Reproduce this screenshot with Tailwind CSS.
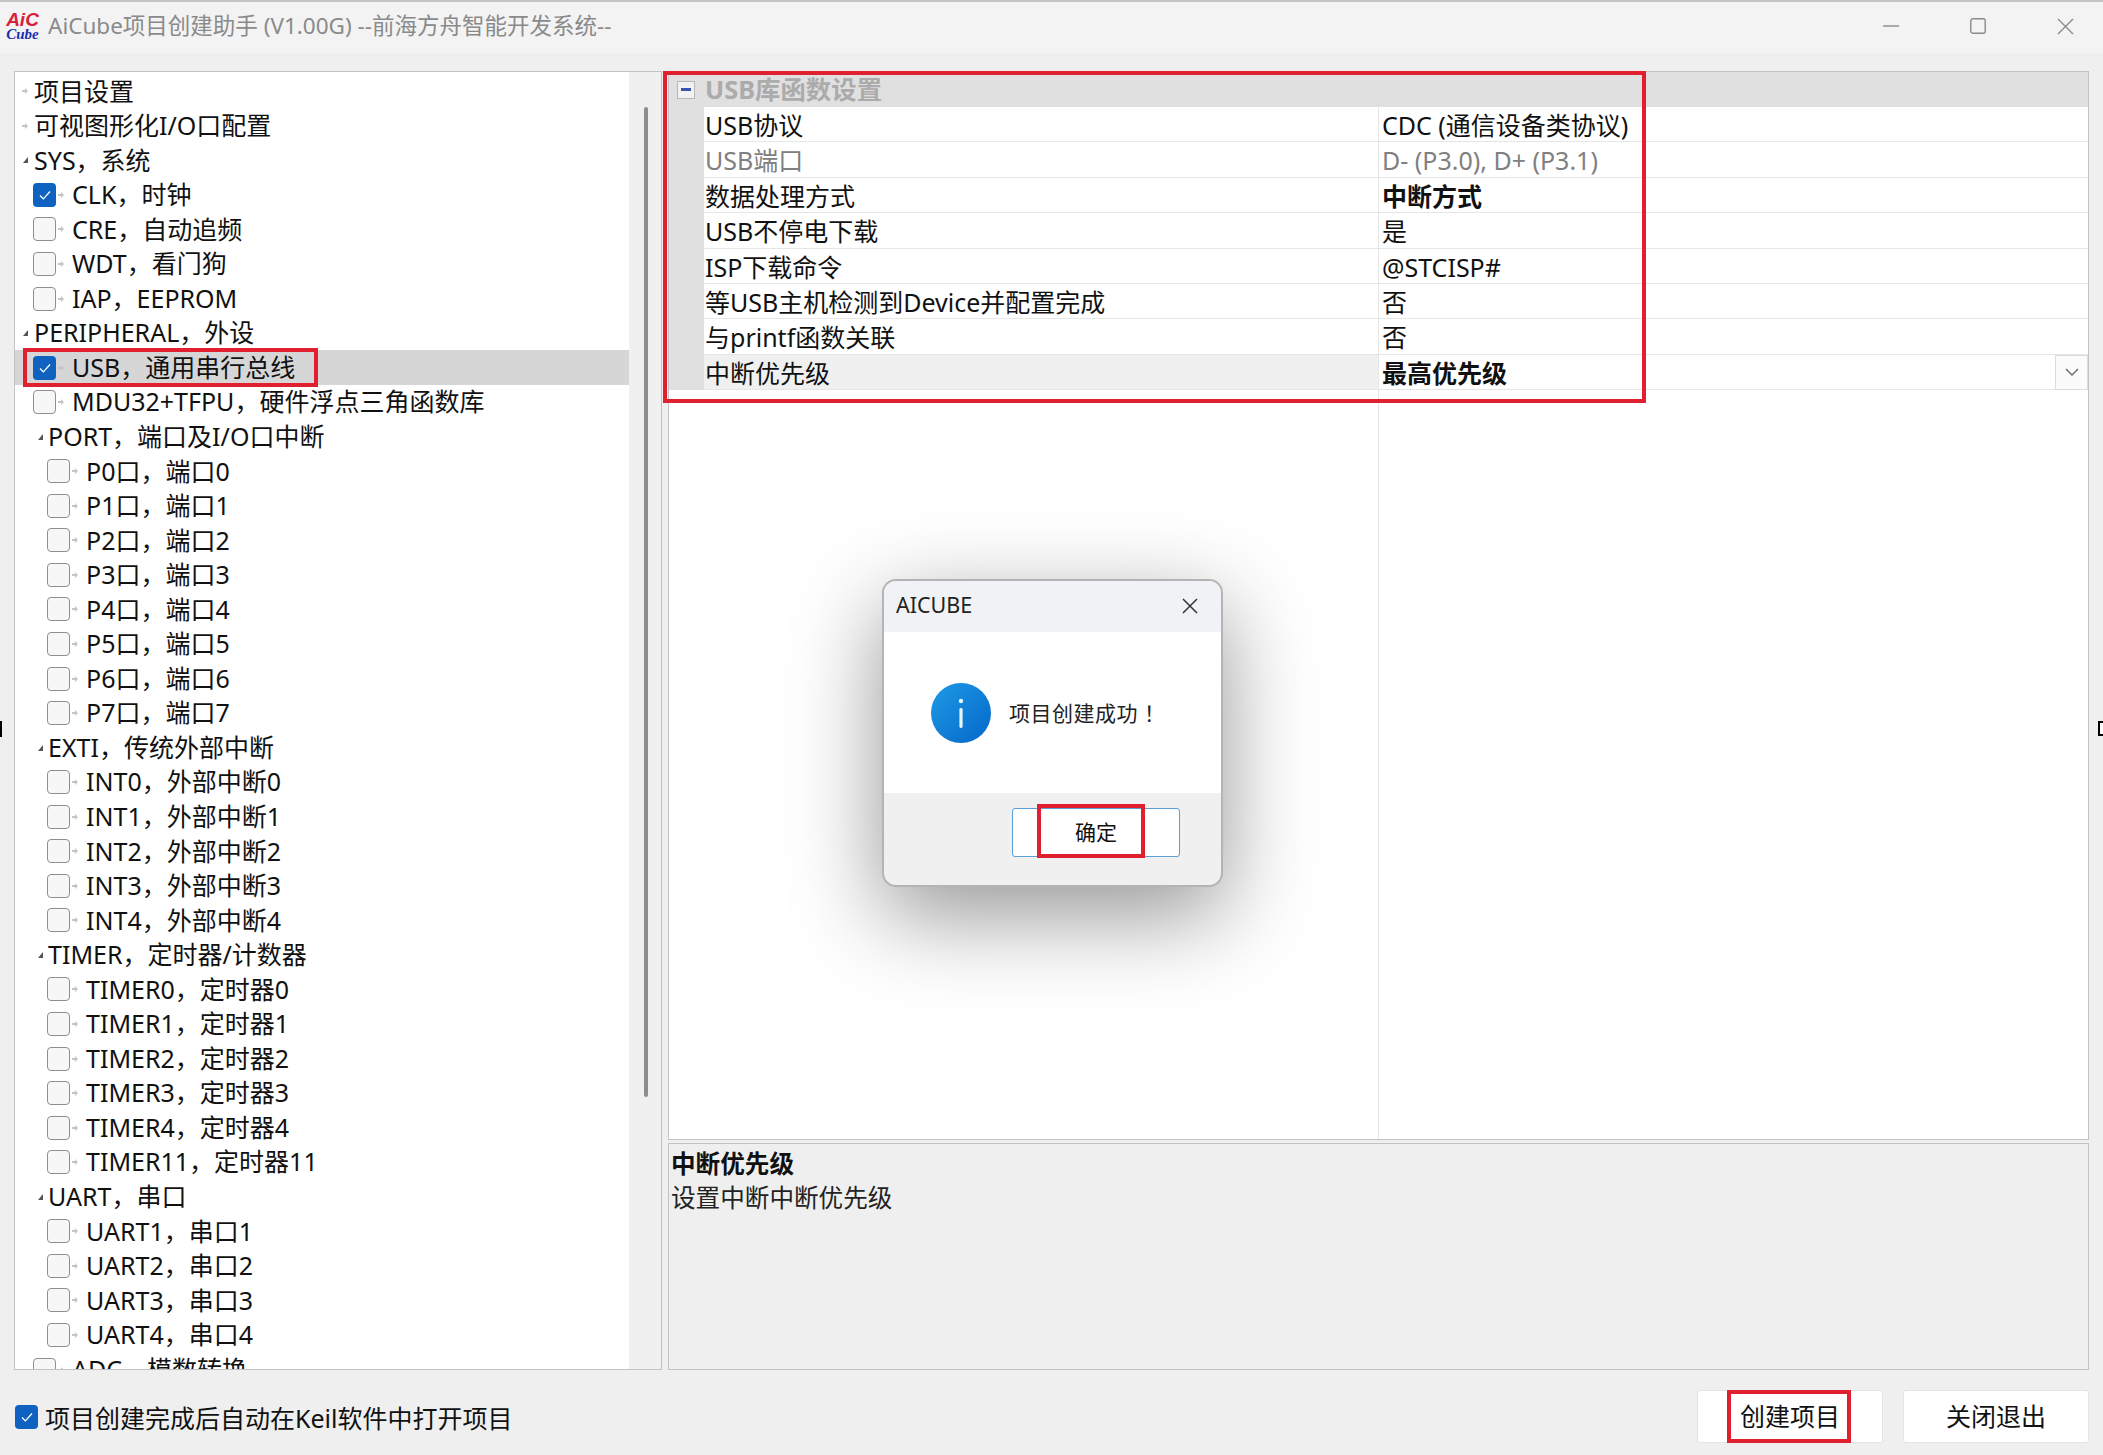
<!DOCTYPE html>
<html lang="zh-CN">
<head>
  <meta charset="UTF-8">
  <title>AiCube项目创建助手</title>
  <script src="https://cdn.jsdelivr.net/npm/@tailwindcss/browser@4"></script>
</head>
<body class="bg-[#efefef] overflow-hidden font-['Noto_Sans','Noto_Sans_CJK_SC',sans-serif] text-[#111]">
  <div class="relative w-[2103px] h-[1455px] flex flex-col border-t-2 border-[#c4c4c4]">

    <!-- title bar -->
    <div class="h-[51px] flex items-center bg-[#f3f3f3] shrink-0">
      <div class="w-[48px] pr-[3px] -mt-[2px] flex flex-col items-center italic font-bold leading-[15px]">
        <span class="text-[19px] text-[#d8203c] font-['Liberation_Sans',sans-serif]">AiC</span>
        <span class="text-[15px] text-[#1a2fb0] font-['Liberation_Serif',serif]">Cube</span>
      </div>
      <span class="text-[22.5px] -mt-[3px] text-[#8a8a8a]">AiCube项目创建助手 (V1.00G) --前海方舟智能开发系统--</span>
      <div class="ml-auto flex items-center text-[#8a8a8a] -mt-[3px]">
        <svg class="w-[16px] h-[16px] mr-[71px]" viewBox="0 0 16 16"><path d="M0 8h16" stroke="currentColor" stroke-width="1.4"/></svg>
        <svg class="w-[16px] h-[16px] mr-[71px]" viewBox="0 0 16 16"><rect x=".8" y=".8" width="14.4" height="14.4" rx="2" fill="none" stroke="currentColor" stroke-width="1.4"/></svg>
        <svg class="w-[17px] h-[17px] mr-[29px]" viewBox="0 0 17 17"><path d="M1 1l15 15M16 1L1 16" stroke="currentColor" stroke-width="1.4"/></svg>
      </div>
    </div>

    <div class="h-[18px] shrink-0"></div>

    <!-- main area -->
    <div class="h-[1299px] flex shrink-0 pl-[14px] pr-[14px]">
      <!-- tree -->
      <div class="relative w-[648px] h-full border border-[#c2c2c2] flex bg-[#f0f0f0] overflow-hidden">
        <div id="tree" class="w-[614px] h-full bg-white pt-[2px] overflow-hidden"></div>
        <div class="flex-1 relative">
          <div class="absolute left-[15px] top-[35px] w-[4px] h-[990px] rounded-full bg-[#8d8d8d]"></div>
        </div>
      </div>

      <!-- right column -->
      <div class="ml-[6px] flex-1 flex flex-col">
        <div class="h-[1069px] bg-white border border-[#c2c2c2] flex flex-col overflow-hidden shrink-0">
          <div class="h-[35px] bg-[#e0e0e0] flex items-center shrink-0">
            <div class="ml-[8px] w-[18px] h-[18px] border border-[#b8b8b8] bg-[#f2f2f2] flex items-center justify-center">
              <div class="w-[10px] h-[3px] bg-[#3a55b0]"></div>
            </div>
            <span class="ml-[10px] mt-px text-[25.4px] font-bold text-[#ababab] leading-none">USB库函数设置</span>
          </div>
          <div id="props" class="flex flex-col shrink-0"></div>
          <div class="flex-1 flex">
            <div class="w-[710px] border-r border-[#e6e6e6]"></div>
          </div>
        </div>
        <div class="mt-[3px] flex-1 border border-[#c2c2c2] bg-[#efefef] px-[2px] pt-[3px] text-[24.6px] leading-[34px]">
          <div class="font-bold">中断优先级</div>
          <div class="text-[#222]">设置中断中断优先级</div>
        </div>
      </div>
    </div>

    <!-- footer -->
    <div class="flex-1 flex items-start pl-[15px] pr-[14px] pt-[20px]">
      <div class="mt-[15px] w-[23px] h-[24px] rounded-[4px] bg-[#0f62c0] flex items-center justify-center">
        <svg class="w-[14px] h-[14px]" viewBox="0 0 14 14"><path d="M2 7.5l3.4 3.4L12 3.5" fill="none" stroke="#fff" stroke-width="1.3"/></svg>
      </div>
      <span class="mt-[10px] ml-[7px] text-[25px] leading-[36px]">项目创建完成后自动在Keil软件中打开项目</span>
      <button class="relative ml-auto w-[186px] h-[53px] bg-white rounded-[3px] border border-[#e4e4e4] text-[25px]">
        创建项目
        <span class="absolute left-[29px] -top-px w-[124px] h-[53px] border-[4px] border-[#e0202f]"></span>
      </button>
      <button class="ml-[20px] w-[186px] h-[53px] bg-white rounded-[3px] border border-[#e4e4e4] text-[25px]">关闭退出</button>
    </div>

    <!-- annotation frames -->
    <div class="absolute left-[23px] top-[346px] w-[295px] h-[39px] border-[4px] border-[#e0202f]"></div>
    <div class="absolute left-[663px] top-[69px] w-[983px] h-[332px] border-[4px] border-[#e0202f]"></div>

    <!-- leftovers of the resize cursor at the window edges -->
    <div class="absolute left-0 top-[719px] w-[2px] h-[16px] bg-black"></div>
    <div class="absolute right-0 top-[719px] w-[5px] h-[15px] border-2 border-r-0 border-black bg-white"></div>

    <!-- message box -->
    <div class="absolute left-[882px] top-[577px] w-[341px] h-[308px] rounded-[14px] border-2 border-[#b4b4b4] bg-[#f0f0f0] shadow-[0_28px_90px_rgba(0,0,0,0.42)] flex flex-col overflow-hidden">
      <div class="h-[51px] bg-[#f1f2f5] flex items-center justify-between pl-[12px] pr-[23px] shrink-0">
        <span class="text-[21.5px] text-[#222] -mt-[2px]">AICUBE</span>
        <svg class="w-[16px] h-[16px] -mt-[2px]" viewBox="0 0 16 16"><path d="M1 1l14 14M15 1L1 15" stroke="#333" stroke-width="1.5"/></svg>
      </div>
      <div class="h-[161px] bg-white flex items-center pl-[47px] shrink-0">
        <svg class="w-[60px] h-[60px]" viewBox="0 0 60 60">
          <defs><linearGradient id="infoBlue" x1="0" y1="0" x2="1" y2="1"><stop offset="0" stop-color="#1e9ae6"/><stop offset="1" stop-color="#0467c8"/></linearGradient></defs>
          <circle cx="30" cy="30" r="30" fill="url(#infoBlue)"/>
          <circle cx="30" cy="18" r="2.2" fill="#e8f4fc"/>
          <rect x="28.4" y="25" width="3.2" height="20" rx="1.4" fill="#e8f4fc"/>
        </svg>
        <span class="ml-[18px] mt-[2px] text-[21px] tracking-[0.5px] text-[#222]">项目创建成功 ！</span>
      </div>
      <div class="flex-1 relative">
        <button class="absolute left-[128px] top-[15px] w-[168px] h-[49px] bg-white rounded-[3px] border border-[#5a9fd8] text-[21px]">确定</button>
        <div class="absolute left-[153px] top-[11px] w-[108px] h-[54px] border-[4px] border-[#e0202f]"></div>
      </div>
    </div>
  </div>

  <script>
    // kind: l = plain top level, t = top level with children, s = nested section, c = checkbox row, n = nested checkbox row
    const rows = [
      ['l', '项目设置'], ['l', '可视图形化I/O口配置'], ['t', 'SYS，系统'],
      ['c', 'CLK，时钟', 1], ['c', 'CRE，自动追频'], ['c', 'WDT，看门狗'], ['c', 'IAP，EEPROM'],
      ['t', 'PERIPHERAL，外设'],
      ['c', 'USB，通用串行总线', 1, 1], ['c', 'MDU32+TFPU，硬件浮点三角函数库'],
      ['s', 'PORT，端口及I/O口中断'],
      ['n', 'P0口，端口0'], ['n', 'P1口，端口1'], ['n', 'P2口，端口2'], ['n', 'P3口，端口3'],
      ['n', 'P4口，端口4'], ['n', 'P5口，端口5'], ['n', 'P6口，端口6'], ['n', 'P7口，端口7'],
      ['s', 'EXTI，传统外部中断'],
      ['n', 'INT0，外部中断0'], ['n', 'INT1，外部中断1'], ['n', 'INT2，外部中断2'], ['n', 'INT3，外部中断3'], ['n', 'INT4，外部中断4'],
      ['s', 'TIMER，定时器/计数器'],
      ['n', 'TIMER0，定时器0'], ['n', 'TIMER1，定时器1'], ['n', 'TIMER2，定时器2'], ['n', 'TIMER3，定时器3'], ['n', 'TIMER4，定时器4'], ['n', 'TIMER11，定时器11'],
      ['s', 'UART，串口'],
      ['n', 'UART1，串口1'], ['n', 'UART2，串口2'], ['n', 'UART3，串口3'], ['n', 'UART4，串口4'],
      ['c', 'ADC，模数转换']
    ];
    const checkedBox = '<span class="w-[23px] h-[24px] rounded-[4px] bg-[#0f62c0] flex items-center justify-center shrink-0"><svg class="w-[14px] h-[14px]" viewBox="0 0 14 14"><path d="M2 7.5l3.4 3.4L12 3.5" fill="none" stroke="#fff" stroke-width="1.3"/></svg></span>';
    const emptyBox = '<span class="w-[23px] h-[24px] rounded-[4px] border border-[#8f8f8f] bg-[#f7f7f7] shrink-0"></span>';
    const dot = '<svg class="w-[6px] h-[6px] shrink-0" viewBox="0 0 6 6"><path d="M0 2h3V0l3 3-3 3V4H0z" fill="#c4c4c4"/></svg>';
    const arrow = '<svg class="w-[5px] h-[6px] shrink-0" viewBox="0 0 5 6"><path d="M5 0v6H0z" fill="#555"/></svg>';

    document.getElementById('tree').innerHTML = rows.map(([kind, label, checked, selected]) => {
      const rowClass = selected ? 'bg-[#d6d6d6]' : '';
      let lead = '';
      if (kind === 'l') lead = '<span class="w-[7px]"></span>' + dot + '<span class="w-[6px]"></span>';
      if (kind === 't') lead = '<span class="w-[8px]"></span>' + arrow + '<span class="w-[6px]"></span>';
      if (kind === 's') lead = '<span class="w-[23px]"></span>' + arrow + '<span class="w-[5px]"></span>';
      if (kind === 'c') lead = '<span class="w-[18px]"></span>' + (checked ? checkedBox : emptyBox) + '<span class="w-[2px]"></span>' + dot + '<span class="w-[8px]"></span>';
      if (kind === 'n') lead = '<span class="w-[32px]"></span>' + emptyBox + '<span class="w-[2px]"></span>' + dot + '<span class="w-[8px]"></span>';
      return `<div class="h-[34.55px] flex items-center text-[25px] whitespace-nowrap ${rowClass}">${lead}<span>${label}</span></div>`;
    }).join('');

    const props = [
      ['USB协议', 'CDC (通信设备类协议)'],
      ['USB端口', 'D- (P3.0), D+ (P3.1)', 'muted'],
      ['数据处理方式', '中断方式', 'bold'],
      ['USB不停电下载', '是'],
      ['ISP下载命令', '@STCISP#'],
      ['等USB主机检测到Device并配置完成', '否'],
      ['与printf函数关联', '否'],
      ['中断优先级', '最高优先级', 'active']
    ];
    document.getElementById('props').innerHTML = props.map(([name, value, mode]) => {
      const nameColor = mode === 'muted' ? 'text-[#808080]' : 'text-[#111]';
      const valueClass = mode === 'muted' ? 'text-[#808080]' : (mode === 'bold' || mode === 'active') ? 'font-bold' : '';
      const bg = mode === 'active' ? 'bg-[#f0f0f0]' : 'bg-white';
      const chevron = mode === 'active' ? '<span class="absolute right-0 top-0 w-[33px] h-[35px] bg-[#fbfbfb] border border-[#dcdcdc] flex items-center justify-center"><svg class="w-[14px] h-[8px]" viewBox="0 0 14 8"><path d="M1 1l6 6 6-6" fill="none" stroke="#666" stroke-width="1.4"/></svg></span>' : '';
      return `<div class="h-[35.4px] flex text-[25px] whitespace-nowrap">
        <div class="w-[35px] bg-[#e0e0e0] shrink-0"></div>
        <div class="w-[675px] ${bg} ${nameColor} border-b border-r border-[#e6e6e6] pl-[1px] pt-[3px] flex items-center shrink-0">${name}</div>
        <div class="relative flex-1 ${mode === 'active' ? 'bg-white' : bg} ${valueClass} border-b border-[#e6e6e6] pl-[3px] pt-[3px] flex items-center">${value}${chevron}</div>
      </div>`;
    }).join('');
  </script>
</body>
</html>
